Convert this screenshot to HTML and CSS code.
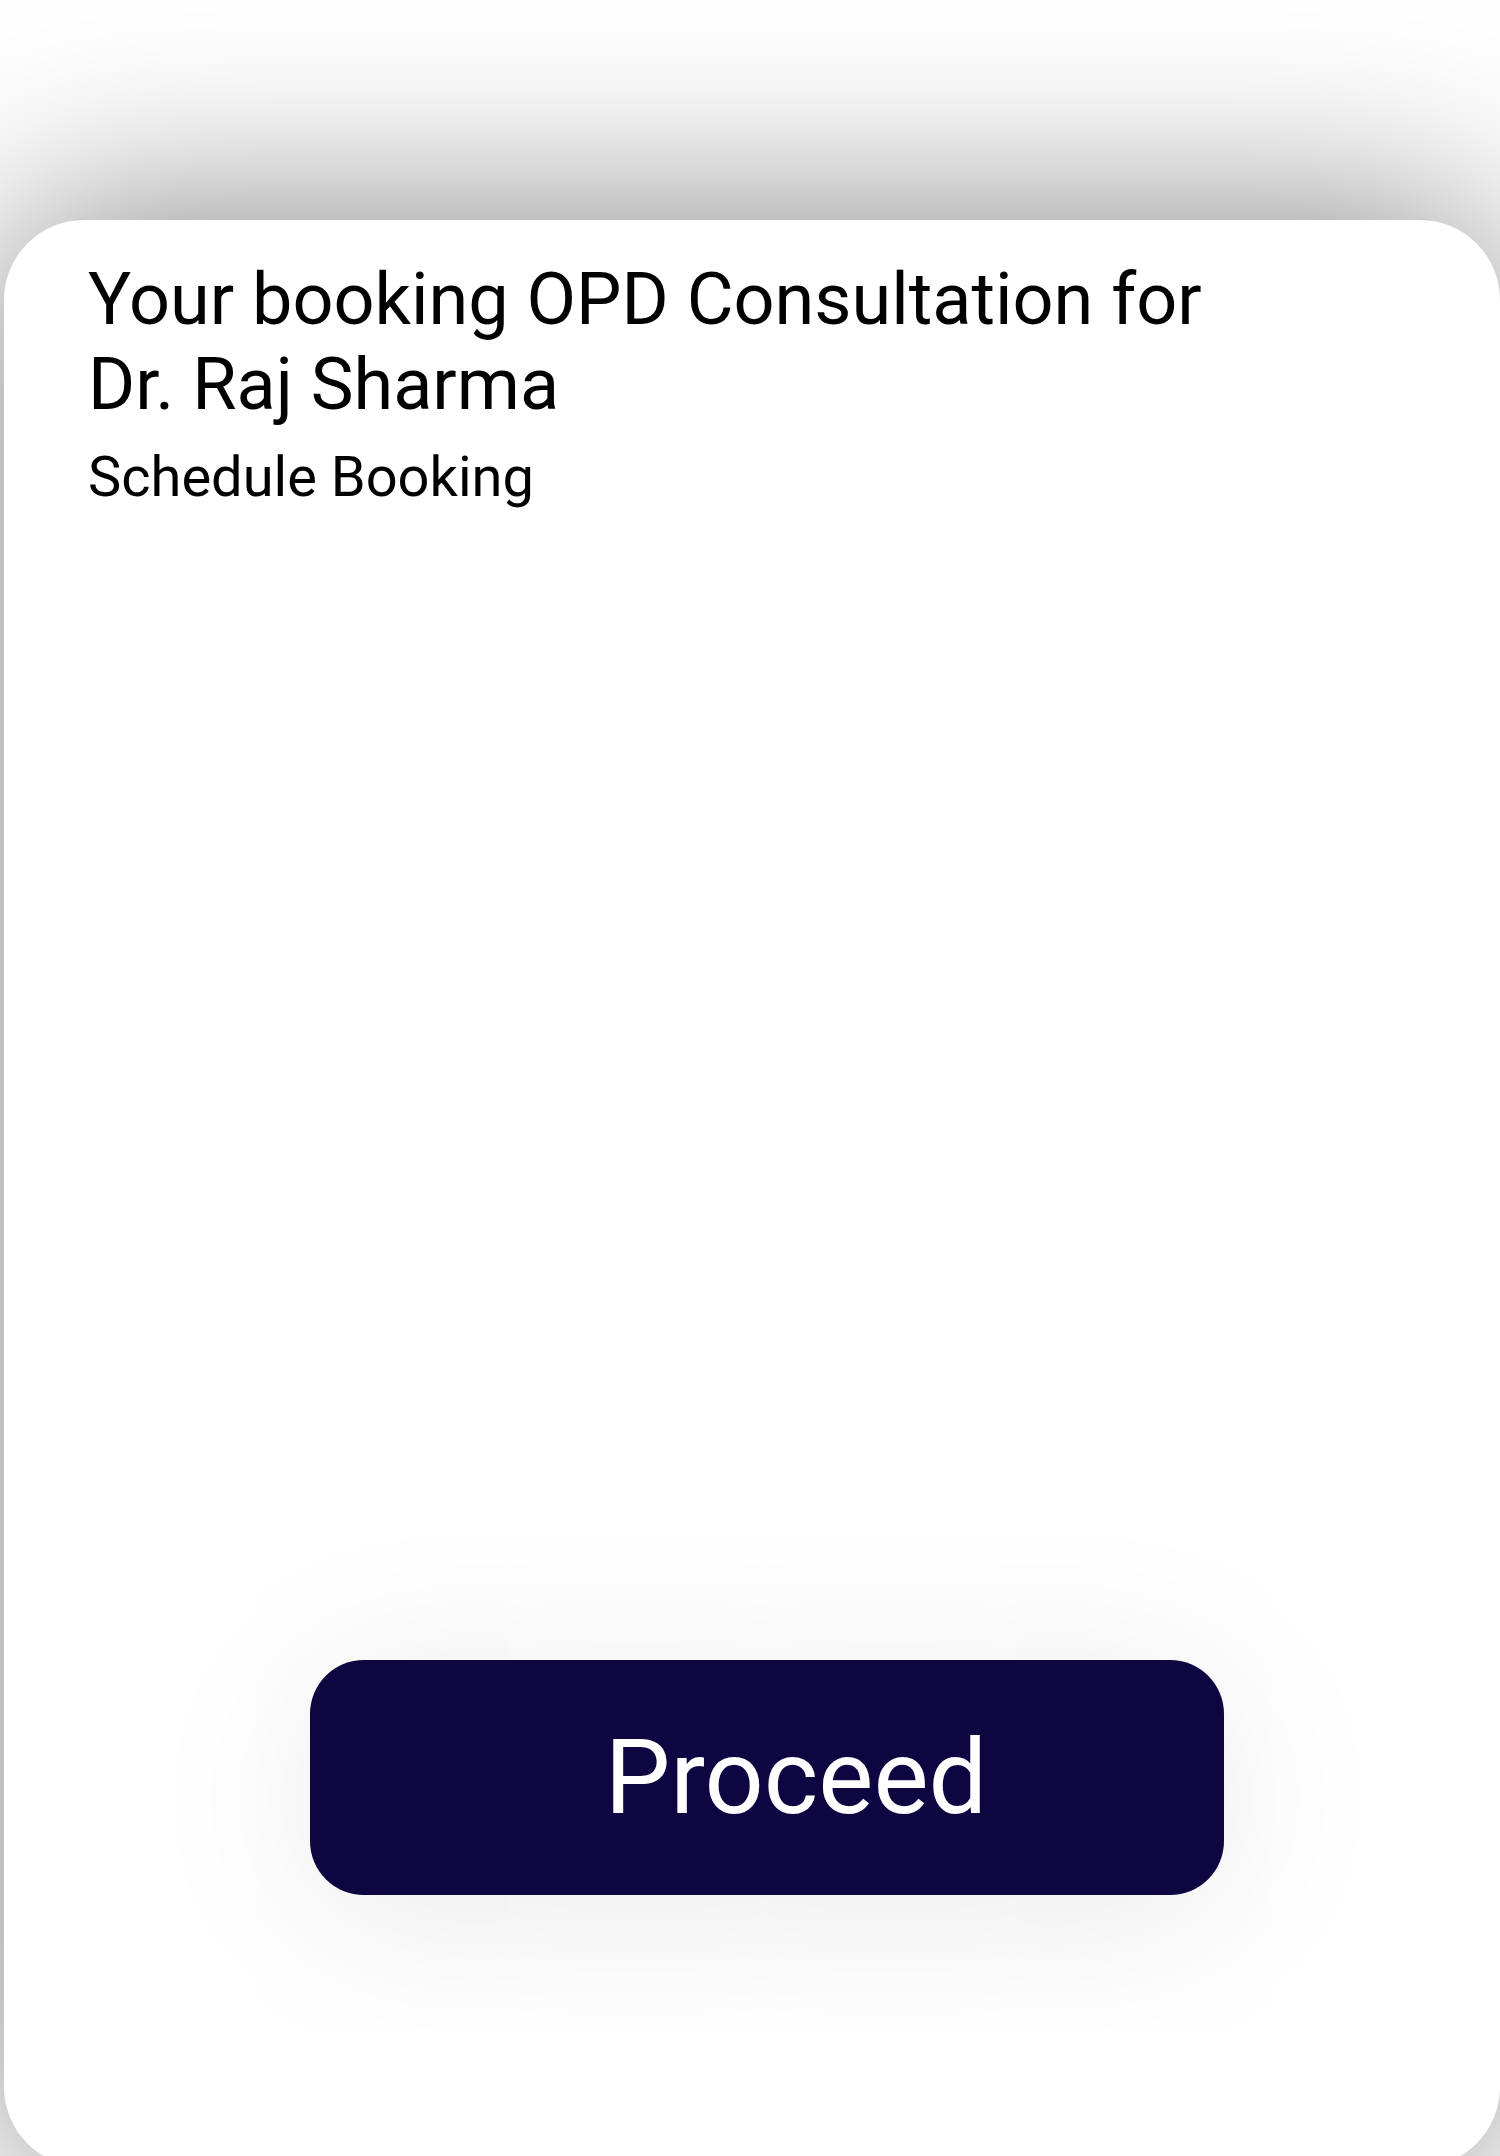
FILE: index.html
```html
<!DOCTYPE html>
<html lang="en">
<head>
<meta charset="utf-8">
<title>Booking</title>
<link rel="stylesheet" href="styles.css">
</head>
<body>
<div class="page">
  <div class="sheet">
    <h1 class="title">Your booking OPD Consultation for Dr. Raj Sharma</h1>
    <p class="subtitle">Schedule Booking</p>
    <button class="proceed" type="button">Proceed</button>
  </div>
</div>
</body>
</html>
```

FILE: styles.css
```css
html, body {
  margin: 0;
  padding: 0;
  height: 100%;
  overflow: hidden;
  background: #ffffff;
}

.page {
  padding: 220px 0 0 4px;
  box-sizing: border-box;
  height: 100%;
}

.sheet {
  width: 1496px;
  height: 1947px;
  box-sizing: border-box;
  background: #ffffff;
  border-radius: 80px;
  box-shadow: 0 0 200px rgba(0, 0, 0, 0.5);
  display: flex;
  flex-direction: column;
  align-items: flex-start;
  padding: 37px 0 272px 84px;
  font-family: Roboto, "Liberation Sans", sans-serif;
  color: #000000;
}

.title {
  margin: 0;
  max-width: 1150px;
  font-size: 72px;
  font-weight: 400;
  line-height: normal;
}

.subtitle {
  margin: 17px 0 0 0;
  font-size: 56px;
  font-weight: 400;
  line-height: normal;
}

.proceed {
  margin: auto 0 0 222px;
  width: 914px;
  height: 235px;
  border: none;
  border-radius: 54px;
  background: #0d0640;
  color: #ffffff;
  font-family: Roboto, "Liberation Sans", sans-serif;
  font-size: 104px;
  font-weight: 400;
  display: flex;
  align-items: center;
  justify-content: center;
  padding: 0 0 0 58px;
  box-sizing: border-box;
  box-shadow: 0 20px 180px rgba(0, 0, 0, 0.09);
}
```
